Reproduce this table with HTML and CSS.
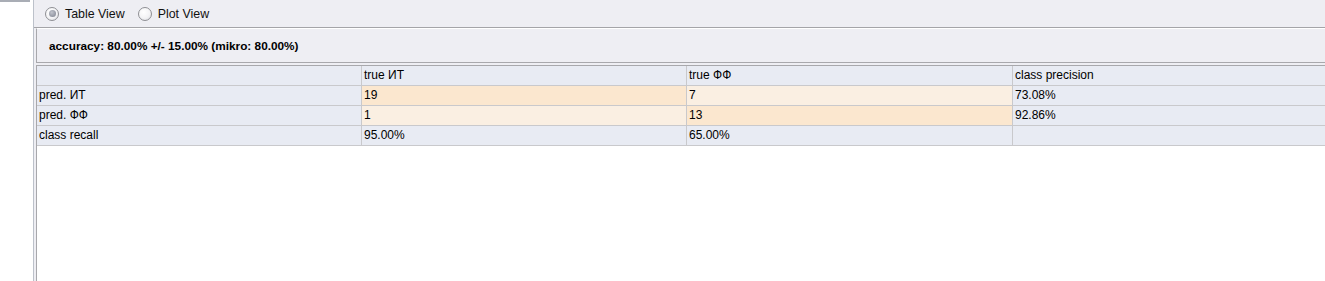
FILE: index.html
```html
<!DOCTYPE html>
<html>
<head>
<meta charset="utf-8">
<link rel="stylesheet" href="styles.css">
</head>
<body>
<div class="app">
  <div class="side"><div class="side-tab"></div></div>
  <div class="main">
    <div class="radios">
      <label class="radio"><span class="dot on"></span>Table View</label>
      <label class="radio"><span class="dot"></span>Plot View</label>
    </div>
    <div class="acc">accuracy: 80.00% +/- 15.00% (mikro: 80.00%)</div>
    <div class="pane">
      <div class="grid">
        <div class="c h"></div>
        <div class="c h">true ИТ</div>
        <div class="c h">true ФФ</div>
        <div class="c h">class precision</div>

        <div class="c h">pred. ИТ</div>
        <div class="c d1">19</div>
        <div class="c d2">7</div>
        <div class="c h">73.08%</div>

        <div class="c h">pred. ФФ</div>
        <div class="c d2">1</div>
        <div class="c d1">13</div>
        <div class="c h">92.86%</div>

        <div class="c h">class recall</div>
        <div class="c h">95.00%</div>
        <div class="c h">65.00%</div>
        <div class="c h"></div>
      </div>
    </div>
  </div>
</div>
</body>
</html>
```

FILE: styles.css
```css
html, body {
  margin: 0;
  padding: 0;
  background: #ffffff;
}
body {
  font-family: "Liberation Sans", Arial, sans-serif;
  font-size: 12px;
  color: #000;
}
.app {
  display: flex;
  height: 281px;
  overflow: hidden;
}
.side {
  width: 33px;
  flex: none;
  background: #ffffff;
  border-right: 1px solid #bcc1ca;
}
.side-tab {
  width: 30px;
  height: 2px;
  background: #a9adb5;
}
.main {
  flex: 1;
  display: flex;
  flex-direction: column;
  background: #eeeef3;
  min-width: 0;
}
.radios {
  flex: none;
  display: flex;
  align-items: center;
  gap: 13px;
  padding-left: 11px;
  border-bottom: 1px solid #a4a4a8;
  box-sizing: border-box;
  height: 28px;
}
.radio {
  display: flex;
  align-items: center;
  gap: 6px;
  font-size: 12.4px;
  color: #111;
}
.dot {
  width: 14px;
  height: 14px;
  border-radius: 50%;
  border: 1px solid #8e8f94;
  background: radial-gradient(circle at 40% 35%, #ffffff 0%, #f3f3f5 55%, #d8d9de 100%);
  box-sizing: border-box;
  display: flex;
  align-items: center;
  justify-content: center;
}
.dot.on::after {
  content: "";
  width: 7px;
  height: 7px;
  border-radius: 50%;
  background: radial-gradient(circle at 40% 35%, #c0c3cc 0%, #7d818e 100%);
}
.acc {
  flex: none;
  margin-left: 2px;
  height: 35px;
  box-sizing: border-box;
  border-top: 1px solid #ffffff;
  border-left: 1px solid #a8a8ac;
  border-bottom: 1px solid #a8a8ac;
  display: flex;
  align-items: center;
  padding-left: 12px;
  font-weight: bold;
  font-size: 11.8px;
}
.pane {
  flex: 1;
  margin-top: 2px;
  margin-left: 2px;
  background: #ffffff;
  border-top: 1px solid #a8a8ac;
  border-left: 1px solid #a8a8ac;
}
.grid {
  display: grid;
  grid-template-columns: 325px 325px 326px 330px;
  grid-auto-rows: 20px;
}
.c {
  box-sizing: border-box;
  border-right: 1px solid #c9c9cc;
  border-bottom: 1px solid #c9c9cc;
  padding-left: 2px;
  line-height: 19px;
  font-size: 12px;
  white-space: nowrap;
  overflow: hidden;
}
.h {
  background: #e8ebf3;
}
.d1 {
  background: #fbe7cf;
}
.d2 {
  background: #faefe2;
}
```
